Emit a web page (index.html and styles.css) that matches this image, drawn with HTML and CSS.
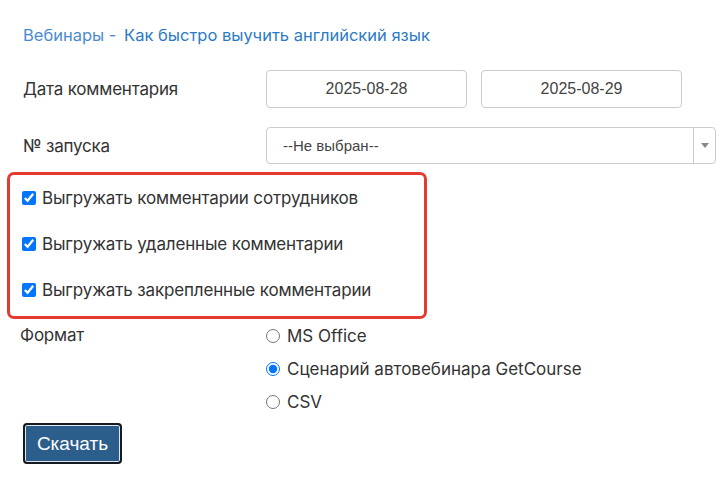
FILE: index.html
```html
<!DOCTYPE html>
<html lang="ru">
<head>
<meta charset="utf-8">
<link rel="stylesheet" href="styles.css">
</head>
<body>
<div class="page">
  <div class="crumbs"><a class="crumb-parent">Вебинары -</a> <a class="crumb-current">Как быстро выучить английский язык</a></div>

  <div class="row row-date">
    <div class="label">Дата комментария</div>
    <div class="fields">
      <div class="input">2025-08-28</div>
      <div class="input">2025-08-29</div>
    </div>
  </div>

  <div class="row row-select">
    <div class="label">№ запуска</div>
    <div class="select">
      <div class="select-value">--Не выбран--</div>
      <div class="select-arrow"><span class="tri"></span></div>
    </div>
  </div>

  <div class="highlight">
    <label class="check"><input type="checkbox" checked><span>Выгружать комментарии сотрудников</span></label>
    <label class="check"><input type="checkbox" checked><span>Выгружать удаленные комментарии</span></label>
    <label class="check"><input type="checkbox" checked><span>Выгружать закрепленные комментарии</span></label>
  </div>

  <div class="format">
    <div class="format-label">Формат</div>
    <div class="radios">
      <label class="radio"><input type="radio" name="fmt"><span>MS Office</span></label>
      <label class="radio"><input type="radio" name="fmt" checked><span>Сценарий автовебинара GetCourse</span></label>
      <label class="radio"><input type="radio" name="fmt"><span>CSV</span></label>
    </div>
  </div>

  <button class="btn">Скачать</button>
</div>
</body>
</html>
```

FILE: styles.css
```css
html, body {
  margin: 0;
  padding: 0;
  background: #fff;
}
body {
  font-family: Inter, "Noto Sans", sans-serif;
  color: #333;
}
.page {
  padding: 24px 0 0 23px;
}
.crumbs {
  font-size: 16.5px;
  line-height: 22px;
}
.crumb-parent {
  color: #4a8bd0;
}
.crumb-current {
  color: #2b7bc4;
  margin-left: 3px;
}
.row {
  display: flex;
  align-items: center;
}
.row-date {
  margin-top: 24px;
}
.row-select {
  margin-top: 19px;
}
.label {
  width: 243px;
  font-size: 17px;
  letter-spacing: -0.2px;
  color: #333;
}
.fields {
  display: flex;
  gap: 14px;
}
.input {
  box-sizing: border-box;
  width: 201px;
  height: 38px;
  border: 1px solid #ccc;
  border-radius: 4px;
  display: flex;
  align-items: center;
  justify-content: center;
  font-family: "Liberation Sans", Arial, sans-serif;
  font-size: 16px;
  color: #444;
}
.select {
  box-sizing: border-box;
  width: 450px;
  height: 37px;
  border: 1px solid #ccc;
  border-radius: 4px;
  display: flex;
  font-family: "Liberation Sans", Arial, sans-serif;
  font-size: 15px;
  color: #444;
}
.select-value {
  flex: 1;
  display: flex;
  align-items: center;
  padding-left: 16px;
}
.select-arrow {
  width: 21px;
  border-left: 1px solid #ccc;
  display: flex;
  align-items: center;
  justify-content: center;
}
.tri {
  width: 0;
  height: 0;
  border-left: 4px solid transparent;
  border-right: 4px solid transparent;
  border-top: 5px solid #888;
}
.highlight {
  box-sizing: border-box;
  width: 420px;
  margin: 8px 0 0 -16px;
  border: 3px solid #e53a2f;
  border-radius: 7px;
  padding: 0 0 3px 12px;
}
.check {
  display: flex;
  align-items: center;
  gap: 6px;
  height: 46px;
  font-size: 17px;
  letter-spacing: -0.15px;
  color: #333;
}
.check input {
  margin: 0;
  width: 14px;
  height: 14px;
  accent-color: #0075ff;
}
.radio input {
  margin: 0;
  width: 14px;
  height: 14px;
  accent-color: #0075ff;
}
.format {
  display: flex;
  margin-left: -3px;
}
.format-label {
  width: 246px;
  font-size: 17px;
  line-height: 33px;
  letter-spacing: -0.2px;
  color: #333;
}
.radios {
  display: flex;
  flex-direction: column;
}
.radio {
  display: flex;
  align-items: center;
  gap: 7px;
  height: 33px;
  font-size: 17px;
  color: #333;
}
.btn {
  display: block;
  margin-top: 5px;
  width: 99px;
  height: 41px;
  box-sizing: border-box;
  background: #2c5e8c;
  color: #fff;
  border: 2px solid #151b22;
  box-shadow: inset 0 0 0 1px #dfe6ee;
  border-radius: 4px;
  font-family: "Liberation Sans", Arial, sans-serif;
  font-size: 19px;
  padding: 0;
}
```
